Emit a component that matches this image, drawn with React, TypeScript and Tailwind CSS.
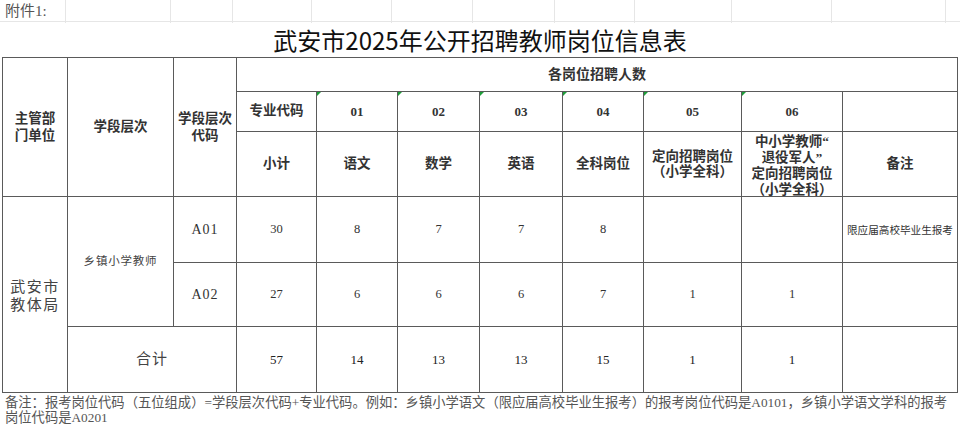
const serif = { fontFamily: '"Liberation Serif", "Noto Sans CJK SC", serif' };
const sans = { fontFamily: '"Noto Sans CJK SC", sans-serif' };

const cols = 'grid-cols-[64px_105px_62px_79px_80px_81px_82px_80px_97px_100px_114px]';

type RowData = { code: string; values: string[]; note?: string };

const rows: RowData[] = [
  { code: 'A01', values: ['30', '8', '7', '7', '8', '', ''], note: '限应届高校毕业生报考' },
  { code: 'A02', values: ['27', '6', '6', '6', '7', '1', '1'] },
];

const totals = ['57', '14', '13', '13', '15', '1', '1'];

function Cell({
  children,
  className = '',
}: {
  children?: React.ReactNode;
  className?: string;
}) {
  return (
    <div className={`relative flex items-center justify-center bg-white text-center ${className}`}>
      {children}
    </div>
  );
}

// little green corner flag, as in the spreadsheet
function Mark() {
  return (
    <span className="absolute left-0 top-0 h-0 w-0 border-r-[4px] border-t-[4px] border-r-transparent border-t-[#1e9e3a]" />
  );
}

export default function App() {
  return (
    <div className="h-[426px] w-[960px] overflow-hidden bg-white text-[#333]" style={serif}>
      {/* sheet row above the title */}
      <div className={`grid h-[22px] ${cols} border-b border-[#e6e6e6] pl-[2px]`}>
        <div className="flex items-center whitespace-nowrap border-r border-[#e6e6e6] pl-[3px] text-[15px] text-[#555]">
          附件1:
        </div>
        {Array.from({ length: 10 }).map((_, i) => (
          <div key={i} className="border-r border-[#e6e6e6]" />
        ))}
      </div>

      {/* title */}
      <div className="flex h-[35px] items-center justify-center pt-[1px] text-[24px] text-[#111]" style={sans}>
        武安市2025年公开招聘教师岗位信息表
      </div>

      {/* table */}
      <div
        className={`ml-[2px] grid w-[956px] ${cols} grid-rows-[33px_39px_64px_65px_63px_65px] gap-px bg-[#5a5a5a] p-px`}
      >
        <Cell className="row-span-3 text-[13.5px] font-bold leading-[17px]">
          主管部
          <br />
          门单位
        </Cell>
        <Cell className="row-span-3 text-[13.5px] font-bold">学段层次</Cell>
        <Cell className="row-span-3 text-[13.5px] font-bold leading-[17px]">
          学段层次
          <br />
          代码
        </Cell>
        <Cell className="col-span-8 text-[14px] font-bold">各岗位招聘人数</Cell>

        <Cell className="text-[13.5px] font-bold">专业代码</Cell>
        {['01', '02', '03', '04', '05', '06'].map((c) => (
          <Cell key={c} className="text-[13px] font-bold">
            <Mark />
            {c}
          </Cell>
        ))}
        <Cell />

        <Cell className="text-[13.5px] font-bold">小计</Cell>
        <Cell className="text-[13.5px] font-bold">语文</Cell>
        <Cell className="text-[13.5px] font-bold">数学</Cell>
        <Cell className="text-[13.5px] font-bold">英语</Cell>
        <Cell className="text-[13.5px] font-bold">全科岗位</Cell>
        <Cell className="text-[13.5px] font-bold leading-[15px]">
          定向招聘岗位
          <br />
          （小学全科）
        </Cell>
        <Cell className="pt-[3px] text-[13.5px] font-bold leading-[16px]">
          中小学教师“
          <br />
          退役军人”
          <br />
          定向招聘岗位
          <br />
          （小学全科）
        </Cell>
        <Cell className="text-[13.5px] font-bold">备注</Cell>

        <Cell className="row-span-3 pt-[2px] text-[15px] leading-[18px] tracking-[1.5px] text-[#444]">
          武安市
          <br />
          教体局
        </Cell>
        <Cell className="row-span-2 text-[11.5px] tracking-[0.8px] text-[#444]">乡镇小学教师</Cell>

        {rows.map((r) => (
          <DataRow key={r.code} row={r} />
        ))}

        <Cell className="col-span-2 text-[15px] tracking-[1px] text-[#444]">合计</Cell>
        {totals.map((v, i) => (
          <Cell key={i} className="text-[13px] text-[#222]">
            {v}
          </Cell>
        ))}
        <Cell />
      </div>

      {/* footnote */}
      <div className="whitespace-nowrap px-[5px] pt-[2px] text-[13.3px] leading-[15px] text-[#555]">
        备注：报考岗位代码（五位组成）=学段层次代码+专业代码。例如：乡镇小学语文（限应届高校毕业生报考）的报考岗位代码是A0101，乡镇小学语文学科的报考
        <br />
        岗位代码是A0201
      </div>
    </div>
  );
}

function DataRow({ row }: { row: RowData }) {
  return (
    <>
      <Cell className="text-[14px] tracking-[1px] text-[#333]">{row.code}</Cell>
      {row.values.map((v, i) => (
        <Cell key={i} className="text-[12.5px] text-[#333]">
          {v}
        </Cell>
      ))}
      <Cell className="text-[10.6px] text-[#333]">
        <span style={sans}>{row.note ?? ''}</span>
      </Cell>
    </>
  );
}
